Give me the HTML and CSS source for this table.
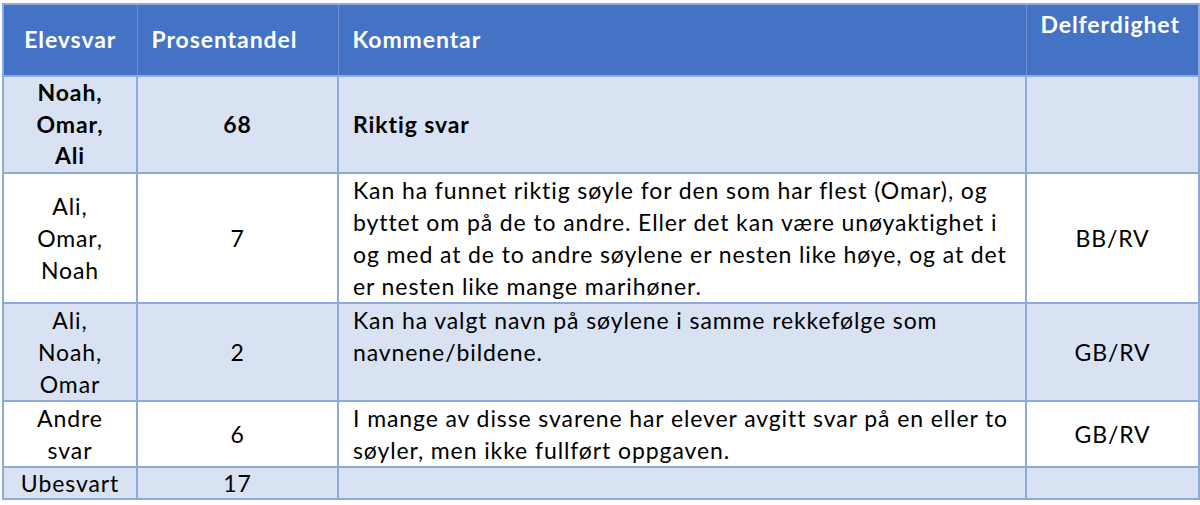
FILE: index.html
```html
<!DOCTYPE html>
<html lang="no">
<head>
<meta charset="utf-8">
<title>Elevsvar</title>
<link rel="stylesheet" href="styles.css">
</head>
<body>
<table class="grid">
  <colgroup>
    <col class="c-elev">
    <col class="c-pros">
    <col class="c-komm">
    <col class="c-delf">
  </colgroup>
  <thead>
    <tr class="head">
      <th class="h-center">Elevsvar</th>
      <th>Prosentandel</th>
      <th>Kommentar</th>
      <th class="h-top">Delferdighet</th>
    </tr>
  </thead>
  <tbody>
    <tr class="shade strong">
      <td class="mid">Noah,<br>Omar,<br>Ali</td>
      <td class="mid">68</td>
      <td class="komm komm-mid">Riktig svar</td>
      <td class="mid"></td>
    </tr>
    <tr>
      <td class="mid">Ali,<br>Omar,<br>Noah</td>
      <td class="mid">7</td>
      <td class="komm">Kan ha funnet riktig søyle for den som har flest (Omar), og byttet om på de to andre. Eller det kan være unøyaktighet i og med at de to andre søylene er nesten like høye, og at det er nesten like mange marihøner.</td>
      <td class="mid">BB/RV</td>
    </tr>
    <tr class="shade">
      <td class="mid">Ali,<br>Noah,<br>Omar</td>
      <td class="mid">2</td>
      <td class="komm">Kan ha valgt navn på søylene i samme rekkefølge som navnene/bildene.</td>
      <td class="mid">GB/RV</td>
    </tr>
    <tr>
      <td class="mid">Andre<br>svar</td>
      <td class="mid">6</td>
      <td class="komm">I mange av disse svarene har elever avgitt svar på en eller to søyler, men ikke fullført oppgaven.</td>
      <td class="mid">GB/RV</td>
    </tr>
    <tr class="shade last">
      <td class="mid">Ubesvart</td>
      <td class="mid">17</td>
      <td class="komm"></td>
      <td class="mid"></td>
    </tr>
  </tbody>
</table>
</body>
</html>
```
FILE: styles.css
```css
html, body {
  margin: 0;
  padding: 0;
  background: #ffffff;
}

body {
  padding: 3px 0 0 2px;
  font-family: Lato, "Liberation Sans", sans-serif;
  font-size: 23px;
  letter-spacing: 0.9px;
  color: #000000;
}

.grid {
  border-collapse: collapse;
  table-layout: fixed;
  width: 1196px;
  border: 2px solid #8eaadb;
}

.c-elev { width: 134px; }
.c-pros { width: 201px; }
.c-komm { width: 688px; }
.c-delf { width: 173px; }

.head {
  height: 72px;
  background: #4472c4;
  color: #ffffff;
}

.head th {
  text-align: left;
  font-weight: 700;
  padding: 0 0 2px 14px;
  vertical-align: middle;
  border-left: 1px solid #6e8fd0;
  border-right: 1px solid #6e8fd0;
  border-bottom: 2px solid #8eaadb;
}

.head th.h-center {
  text-align: center;
  padding-left: 0;
}

.head th.h-top {
  vertical-align: top;
  padding-top: 5px;
}

td {
  border: 2px solid #8eaadb;
  line-height: 32px;
  padding: 0 4px;
  text-align: center;
}

td.mid {
  vertical-align: middle;
}

td.komm {
  text-align: left;
  vertical-align: top;
  padding: 0 14px 0 14px;
}

td.komm-mid {
  vertical-align: middle;
}

.shade {
  background: #d9e2f3;
}

.strong td {
  font-weight: 700;
  line-height: 31.5px;
}

.last td {
  line-height: 30px;
}
```
